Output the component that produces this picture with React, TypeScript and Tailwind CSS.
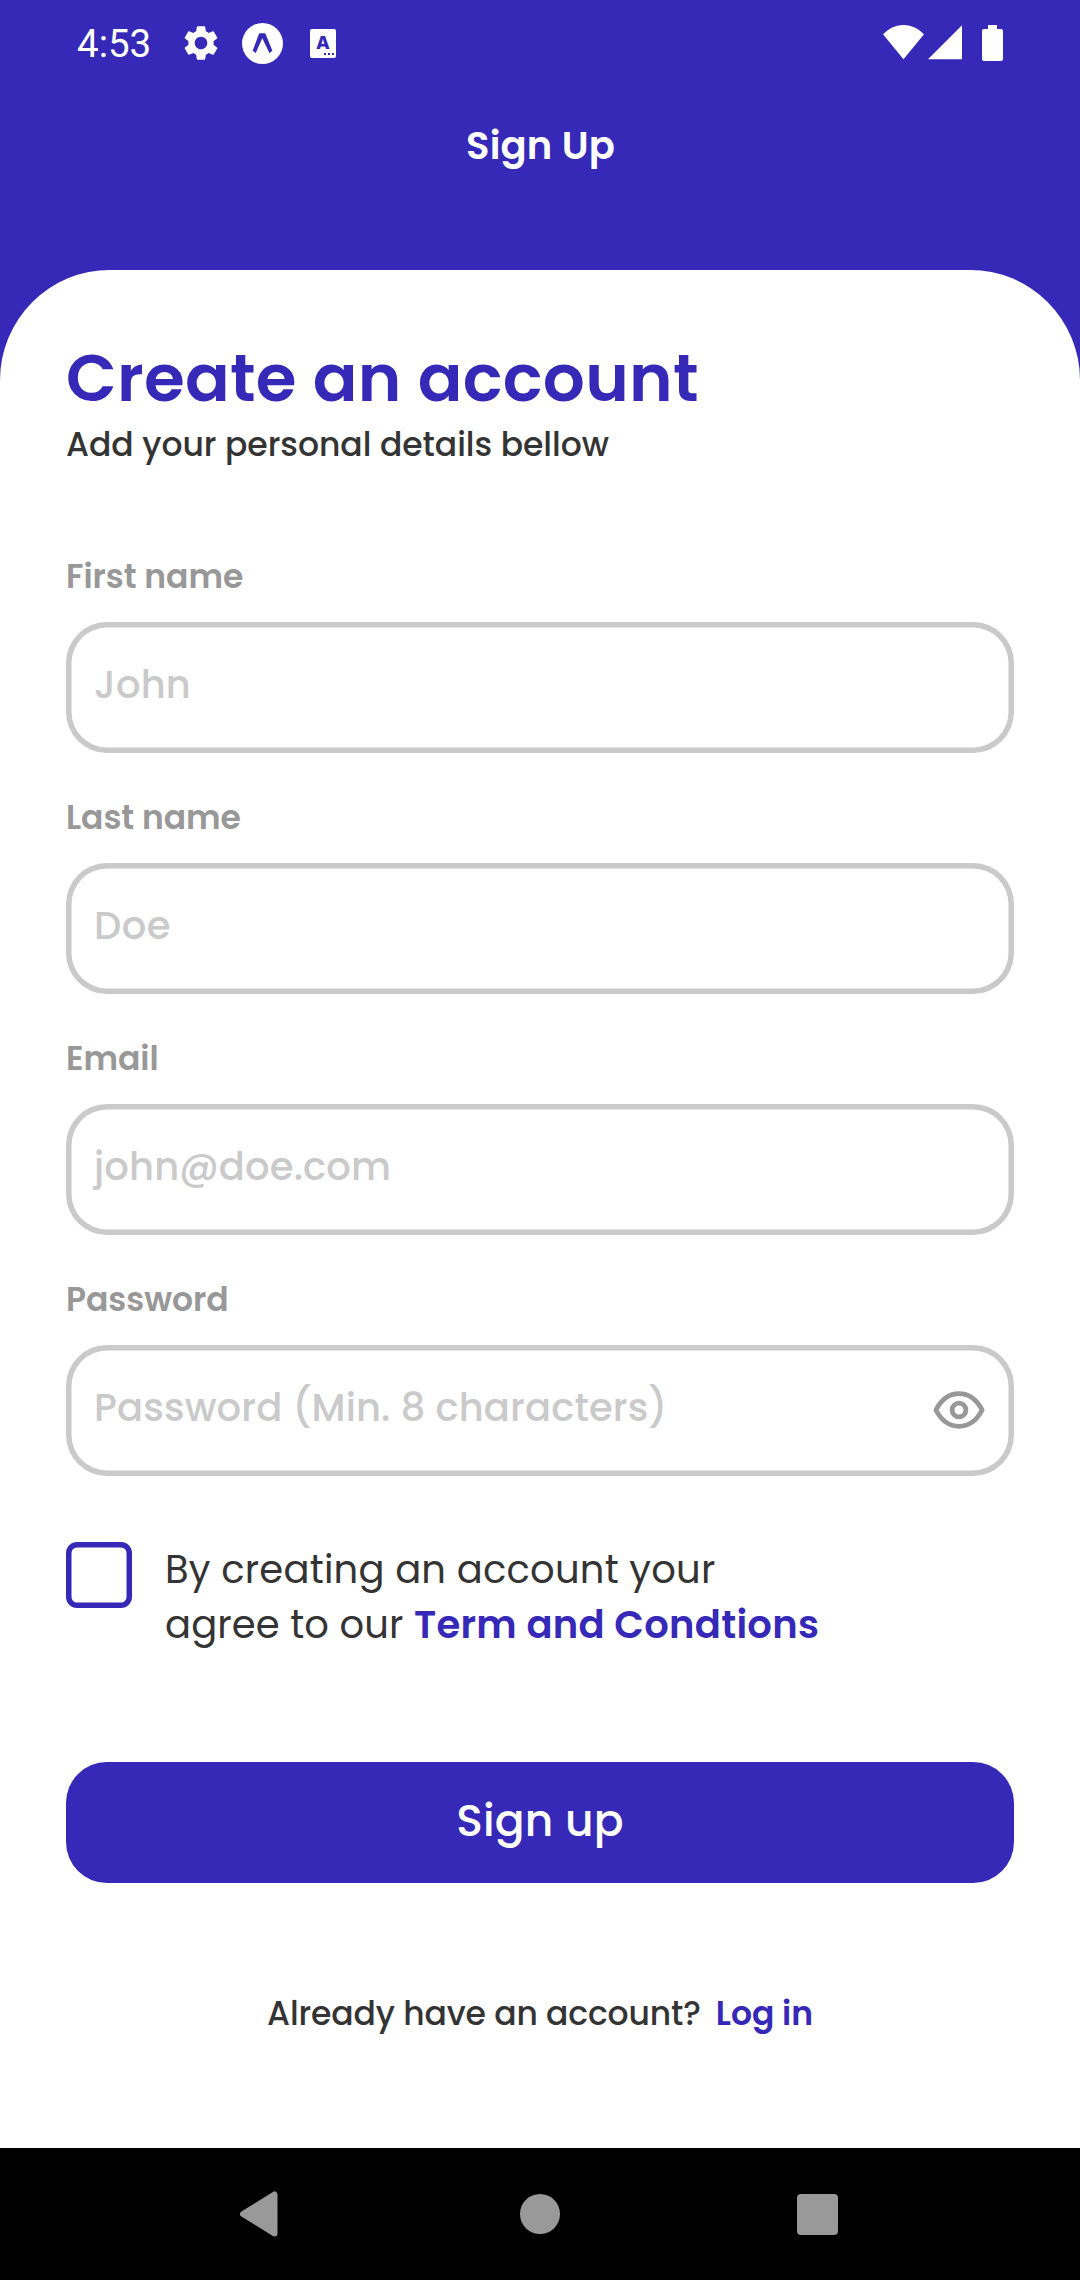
import type { ReactNode } from 'react';
import { MdSettings } from 'react-icons/md';

function StatusBar() {
  return (
    <div className="flex h-[86px] items-center pr-[77px] pl-[77px] text-white">
      <span className="w-[103px] pt-px font-[Roboto,sans-serif] text-[38.5px] leading-[45px]">4:53</span>
      <MdSettings className="size-[42px]" />
      <svg className="mt-px ml-[20px]" width="41" height="41" viewBox="0 0 41 41" fill="none">
        <circle cx="20.5" cy="20.5" r="20.5" fill="#fff" />
        <path
          d="M18 10.3 H22.4 Q23.3 10.4 23.7 11.3 L30.4 27.8 L27.4 29.9 L20.3 15.2 L13.7 29.9 L10.7 27.8 L16.8 11.3 Q17.1 10.4 18 10.3 Z"
          fill="#3629b7"
        />
      </svg>
      <div className="mt-px ml-[27px] flex h-[29px] w-[26px] flex-col items-center rounded-[2px] bg-white pt-[5px] text-[#3629b7]">
        <span className="font-[Inter,sans-serif] text-[18px] leading-[17px] font-extrabold">A</span>
        <div className="mt-[2px] mr-[2px] flex gap-[2px] self-end">
          <i className="size-[2px] bg-[#3629b7]" />
          <i className="size-[2px] bg-[#3629b7]" />
          <i className="size-[2px] bg-[#3629b7]" />
        </div>
      </div>
      <svg className="ml-auto" width="41" height="36" viewBox="0 0 41 36" fill="#fff">
        <path d="M0 9.3 A27.2 27.2 0 0 1 41 9.3 L20.5 34.3 Z" />
      </svg>
      <svg className="ml-[4px]" width="34" height="36" viewBox="0 0 34 36" fill="#fff">
        <path d="M0 34.3 L34 0.3 V34.3 Z" />
      </svg>
      <svg className="ml-[20px]" width="21" height="36" viewBox="0 0 21 36" fill="#fff">
        <path d="M6 0 H15 V4 H19 Q21 4 21 6 V34 Q21 36 19 36 H2 Q0 36 0 34 V6 Q0 4 2 4 H6 Z" />
      </svg>
    </div>
  );
}

function EyeIcon() {
  return (
    <svg
      className="mb-[2px]"
      width="52"
      height="38"
      viewBox="0 0 52 38"
      fill="none"
      stroke="#989898"
      strokeWidth="4.8"
      strokeLinejoin="round"
    >
      <path d="M2.9 19 C8 9.2 16.2 2.7 26 2.7 S44 9.2 49.1 19 C44 28.8 35.8 35.3 26 35.3 S8 28.8 2.9 19 Z" />
      <circle cx="26" cy="19" r="6.9" />
    </svg>
  );
}

type FieldProps = {
  label: string;
  placeholder: string;
  placeholderClass?: string;
  children?: ReactNode;
};

function Field({ label, placeholder, placeholderClass = '', children }: FieldProps) {
  return (
    <div>
      <div className="text-[33px] leading-[45px] font-semibold tracking-[-0.05px] text-[#989898]">{label}</div>
      <div className="mt-[23px] flex h-[131px] items-center justify-between rounded-[41px] pr-[29px] pl-[28px] shadow-[inset_0_0_0_5.5px_#cacaca]">
        <span className={`pb-[5px] text-[38.5px] leading-[58px] font-medium text-[#cacaca] ${placeholderClass}`}>
          {placeholder}
        </span>
        {children}
      </div>
    </div>
  );
}

function NavigationBar() {
  return (
    <div className="flex h-[132px] items-center bg-black pl-[239px]">
      <svg width="39" height="46" viewBox="0 0 39 46">
        <path
          d="M35.5 3.5 V42.5 L4 23 Z"
          fill="#999"
          stroke="#999"
          strokeWidth="6"
          strokeLinejoin="round"
        />
      </svg>
      <div className="ml-[242px] size-[40px] rounded-full bg-[#999]" />
      <div className="mt-px ml-[237px] size-[41px] rounded-[4px] bg-[#999]" />
    </div>
  );
}

export default function App() {
  return (
    <div className="flex h-[2280px] w-[1080px] flex-col bg-[#3629b7] font-[Poppins,Inter,sans-serif]">
      <StatusBar />
      <header className="flex h-[184px] items-start justify-center">
        <h1 className="pl-px text-[38.5px] leading-[119px] font-semibold tracking-[0.15px] text-white">Sign Up</h1>
      </header>
      <main className="flex flex-1 flex-col rounded-t-[110px] bg-white px-[66px] pt-[63px]">
        <h2 className="text-[66px] leading-[90px] font-semibold tracking-[0.28px] text-[#3629b7]">Create an account</h2>
        <p className="text-[33px] leading-[43px] font-medium tracking-[-0.03px] text-[#343434]">
          Add your personal details bellow
        </p>
        <div className="mt-[88px] flex flex-col gap-[42px]">
          <Field label="First name" placeholder="John" placeholderClass="tracking-[0.2px]" />
          <Field label="Last name" placeholder="Doe" placeholderClass="tracking-[0.5px]" />
          <Field label="Email" placeholder="john@doe.com" placeholderClass="tracking-[0.14px]" />
          <Field label="Password" placeholder="Password (Min. 8 characters)" placeholderClass="tracking-[0.13px]">
            <EyeIcon />
          </Field>
        </div>
        <div className="mt-[66px] flex gap-[33px]">
          <div className="size-[66px] shrink-0 rounded-[11px] shadow-[inset_0_0_0_5.5px_#3629b7]" />
          <p className="text-[38.5px] leading-[55px] text-[#343434]">
            <span className="tracking-[0.21px]">By creating an account your</span>
            <br />
            <span className="tracking-[0.13px]">agree to our </span>
            <span className="font-semibold tracking-[0.28px] text-[#3629b7]">Term and Condtions</span>
          </p>
        </div>
        <button className="mt-[110px] flex h-[121px] w-full items-center justify-center rounded-[41px] bg-[#3629b7] pb-[4px] text-[44px] leading-[66px] font-medium tracking-[0.15px] text-white">
          Sign up
        </button>
        <div className="mt-[109px] flex justify-center text-[33px] leading-[43px] text-[#343434]">
          <span className="font-medium tracking-[-0.15px]">Already have an account?</span>
          <a className="ml-[15px] font-semibold tracking-[-0.05px] text-[#3629b7]">Log in</a>
        </div>
      </main>
      <NavigationBar />
    </div>
  );
}
